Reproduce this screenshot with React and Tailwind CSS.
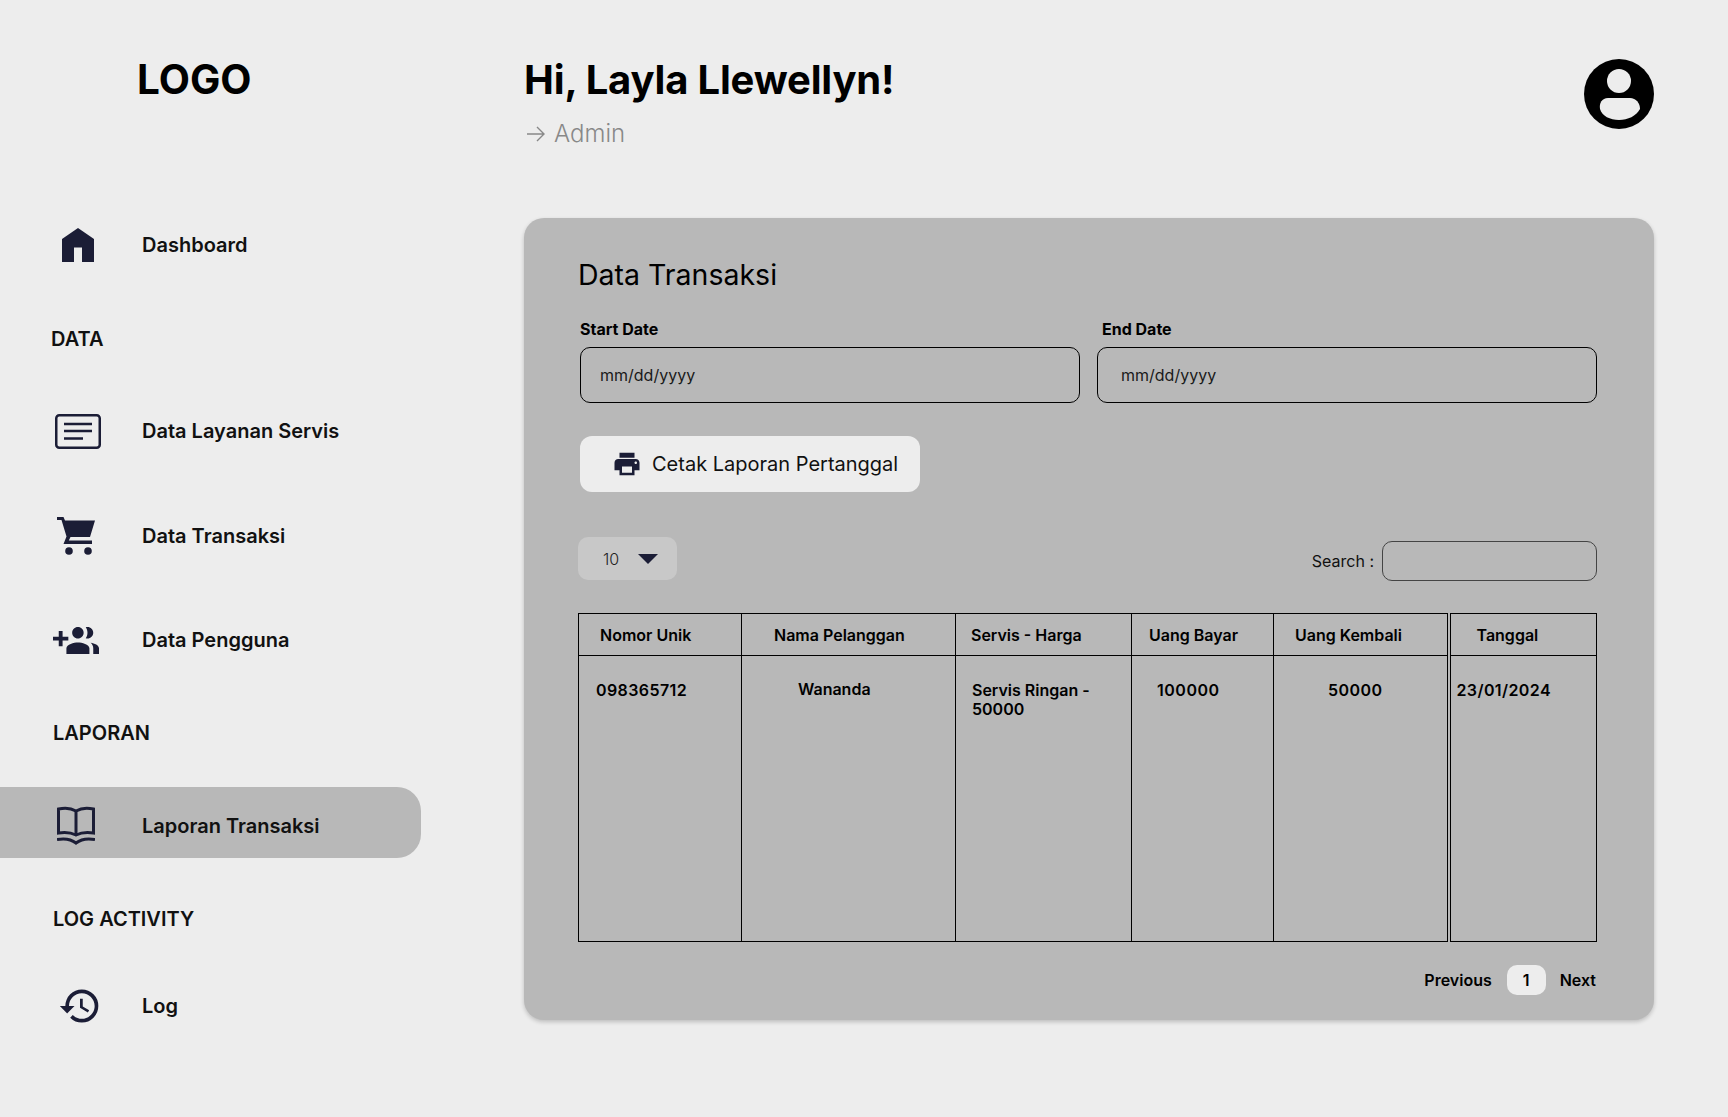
import { MdHistory, MdPrint } from "react-icons/md";

const NAVY = "#1b1d36";

function HomeIcon() {
  return (
    <svg width="32" height="34" viewBox="0 0 32 34" className="ml-[9px]" fill={NAVY}>
      <path d="M16 0 L32 11 V34 H20 V19.5 H12 V34 H0 V11 Z" />
    </svg>
  );
}

function ListIcon() {
  return (
    <svg width="46" height="35" viewBox="0 0 46 35" className="ml-[2px]" fill="none" stroke={NAVY} strokeWidth="2.5">
      <rect x="1.25" y="1.25" width="43.5" height="32.5" rx="3" />
      <path d="M9 10 H37 M9 17 H37 M9 24.5 H28" />
    </svg>
  );
}

function CartIcon() {
  return (
    <svg width="38" height="38" viewBox="0 0 38 38" className="ml-[4px]" fill={NAVY}>
      <path d="M0 0 H6.5 L8 3.5 H38 L33 20 H13.5 L11.8 23.5 H35 V27 H6.5 L9.5 19.5 L4.5 3 H0 Z" />
      <circle cx="12" cy="34" r="3.8" />
      <circle cx="31" cy="34" r="3.8" />
    </svg>
  );
}

function GroupAddIcon() {
  return (
    <svg width="46" height="29" viewBox="0 4.5 24 15" fill={NAVY}>
      <path d="M8 10H5V7H3v3H0v2h3v3h2v-3h3v-2zm10 1c1.66 0 2.99-1.34 2.99-3S19.66 5 18 5c-.32 0-.63.05-.91.14.57.81.9 1.79.9 2.86s-.34 2.04-.9 2.86c.28.09.59.14.91.14zm-5 0c1.66 0 2.99-1.34 2.99-3S14.66 5 13 5s-3 1.34-3 3 1.34 3 3 3zm6.62 2.16c.83.73 1.38 1.66 1.38 2.84v3h3v-3c0-1.54-2.37-2.49-4.38-2.84zM13 13c-2 0-6 1-6 3v3h12v-3c0-2-4-3-6-3z" />
    </svg>
  );
}

function BookIcon() {
  return (
    <svg width="38" height="40" viewBox="0 0 38 40" className="ml-[4px]" fill="none" stroke={NAVY} strokeWidth="3">
      <path d="M1.5 3 C8 1.5 14 2 19 5 C24 2 30 1.5 36.5 3 V27 C30 26 24 26.5 19 29 C14 26.5 8 26 1.5 27 Z" />
      <path d="M19 5 V29" />
      <path d="M0 33.5 C8 32 14 33 19 37 C24 33 30 32 38 33.5" />
    </svg>
  );
}

function NavItem({ icon, label, active, className }) {
  return (
    <div
      className={`flex items-center ${active ? "h-[71px] pt-[7px] bg-[#b8b8b8] rounded-r-[24px] w-[421px]" : "h-[70px]"} ${className}`}
    >
      <div className="w-[89px] ml-[53px] flex items-center">{icon}</div>
      <span className="text-[20px] font-semibold text-[#111]">{label}</span>
    </div>
  );
}

function SectionLabel({ children, className }) {
  return (
    <div className={`h-[70px] flex items-center text-[20px] font-semibold text-[#111] ${className}`}>{children}</div>
  );
}

function Sidebar() {
  return (
    <aside className="w-[524px] shrink-0">
      <div className="pt-[55px] pl-[137px] text-[40.5px] leading-[50px] font-bold text-black">LOGO</div>
      <NavItem className="mt-[105px]" icon={<HomeIcon />} label="Dashboard" />
      <SectionLabel className="mt-[24px] pl-[51px]">DATA</SectionLabel>
      <NavItem className="mt-[22px]" icon={<ListIcon />} label="Data Layanan Servis" />
      <NavItem className="mt-[35px]" icon={<CartIcon />} label="Data Transaksi" />
      <NavItem className="mt-[34px]" icon={<GroupAddIcon />} label="Data Pengguna" />
      <SectionLabel className="mt-[23px] pl-[53px]">LAPORAN</SectionLabel>
      <NavItem active className="mt-[19px]" icon={<BookIcon />} label="Laporan Transaksi" />
      <SectionLabel className="mt-[26px] pl-[53px]">LOG ACTIVITY</SectionLabel>
      <NavItem className="mt-[17px]" icon={<MdHistory size={44} color={NAVY} className="ml-[5px]" />} label="Log" />
    </aside>
  );
}

function DateField({ label, labelClass, inputClass }) {
  return (
    <div>
      <label className={`block text-[16px] leading-[20px] font-bold text-black ${labelClass}`}>{label}</label>
      <input
        type="text"
        placeholder="mm/dd/yyyy"
        className={`mt-[8px] w-full h-[56px] rounded-[10px] border border-black bg-transparent text-[16px] placeholder:text-[#1a1a1a] outline-none ${inputClass}`}
      />
    </div>
  );
}

const columns = [
  { w: "w-[163px]", head: "pl-[21px]", cell: "pl-[17px] pt-[25px] tracking-[0.4px]", title: "Nomor Unik", value: "098365712" },
  { w: "w-[214px]", head: "pl-[32px]", cell: "pl-[56px] pt-[24px]", title: "Nama Pelanggan", value: "Wananda" },
  { w: "w-[176px]", head: "pl-[15px]", cell: "pl-[16px] pt-[25px] pr-[20px]", title: "Servis - Harga", value: "Servis Ringan - 50000" },
  { w: "w-[142px]", head: "pl-[17px]", cell: "pl-[25px] pt-[25px] tracking-[0.5px]", title: "Uang Bayar", value: "100000" },
  { w: "w-[175px]", head: "pl-[21px] border-r-4 border-double", cell: "pl-[54px] pt-[25px] tracking-[0.45px] border-r-4 border-double", title: "Uang Kembali", value: "50000" },
  { w: "w-[148px]", head: "pl-[26px]", cell: "pl-[6px] pt-[25px] tracking-[0.4px]", title: "Tanggal", value: "23/01/2024" },
];

function TransactionTable() {
  return (
    <table className="mt-[32px] -ml-px w-[1018px] table-fixed border-collapse border border-black text-[16px] text-black">
      <colgroup>
        {columns.map((c) => (
          <col key={c.title} className={c.w} />
        ))}
      </colgroup>
      <thead>
        <tr className="h-[42px]">
          {columns.map((c) => (
            <th key={c.title} className={`border border-black text-left font-semibold ${c.head}`}>
              {c.title}
            </th>
          ))}
        </tr>
      </thead>
      <tbody>
        <tr className="h-[286px]">
          {columns.map((c) => (
            <td key={c.title} className={`border border-black align-top font-semibold leading-[19px] ${c.cell}`}>
              {c.value}
            </td>
          ))}
        </tr>
      </tbody>
    </table>
  );
}

function Main() {
  return (
    <main className="w-[1130px]">
      <div className="flex justify-between pt-[54px]">
        <div>
          <h1 className="mt-[1px] text-[40px] leading-[50px] tracking-[-0.17px] font-bold text-black">Hi, Layla Llewellyn!</h1>
          <div className="mt-[14px] flex items-center text-[24px] leading-[30px] font-light text-[#888]">
            <svg width="18" height="16" viewBox="0 0 18 16" fill="none" stroke="#888" strokeWidth="1.4" className="ml-[3px] mr-[9px]">
              <path d="M0 8 H17 M10 1 L17 8 L10 15" />
            </svg>
            Admin
          </div>
        </div>
        <svg width="70" height="70" viewBox="0 0 70 70" className="mt-[5px]">
          <circle cx="35" cy="35" r="35" fill="#000" />
          <circle cx="35" cy="22" r="12" fill="#ededed" />
          <path d="M24 39 H46 C52 39 56 44 56 50 C52 57 44 61 35 61 C26 61 18 57 16 50 C15 44 18 39 24 39 Z" fill="#ededed" />
        </svg>
      </div>

      <section className="mt-[69px] h-[802px] rounded-[20px] bg-[#b8b8b8] pt-[40px] pl-[55px] pr-[57px] shadow-[0_2px_4px_rgba(0,0,0,0.2)]">
        <h2 className="-ml-px text-[28.5px] leading-[34px] font-normal text-black">Data Transaksi</h2>

        <div className="mt-[27px] ml-px grid grid-cols-[500px_500px] gap-x-[17px]">
          <DateField label="Start Date" inputClass="px-[19px]" />
          <DateField label="End Date" labelClass="pl-[5px]" inputClass="px-[23px]" />
        </div>

        <button className="mt-[33px] ml-px h-[56px] w-[340px] flex items-center pl-[32px] rounded-[12px] bg-[#ededed] text-[20px] text-[#111]">
          <MdPrint size={30} color={NAVY} />
          <span className="ml-[10px]">Cetak Laporan Pertanggal</span>
        </button>

        <div className="mt-[45px] flex items-start justify-between">
          <div className="-ml-px h-[43px] w-[99px] flex items-center pl-[25px] rounded-[10px] bg-[#c8c8c8] text-[16px] font-light text-[#222]">
            10
            <svg width="20" height="10" viewBox="0 0 20 10" className="ml-[19px]" fill={NAVY}>
              <path d="M0 0 H20 L10 10 Z" />
            </svg>
          </div>
          <div className="mt-[4px] flex items-center text-[16px] text-[#111]">
            Search :
            <input className="ml-[8px] h-[40px] w-[215px] rounded-[10px] border-[1.5px] border-[#444] bg-transparent outline-none" />
          </div>
        </div>

        <TransactionTable />

        <div className="mt-[23px] mr-px flex items-center justify-end text-[16px] font-semibold text-black">
          <span>Previous</span>
          <span className="ml-[15px] mr-[14px] h-[30px] w-[39px] flex items-center justify-center rounded-[10px] bg-[#ededed]">1</span>
          <span>Next</span>
        </div>
      </section>
    </main>
  );
}

export default function App() {
  return (
    <div className="min-h-screen bg-[#ededed] flex font-['Inter',sans-serif]">
      <Sidebar />
      <Main />
    </div>
  );
}
